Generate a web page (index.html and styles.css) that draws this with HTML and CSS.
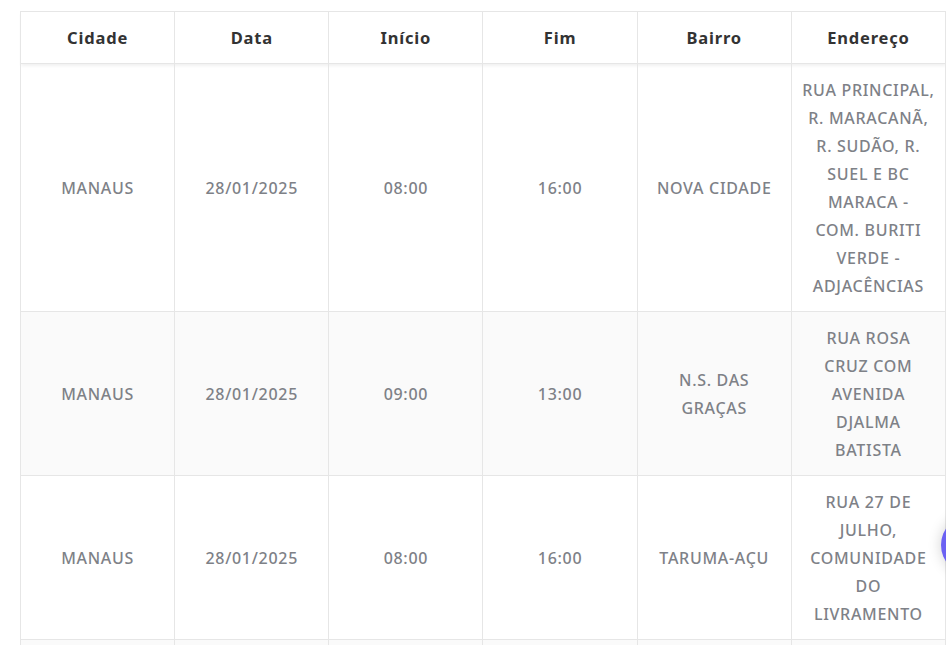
FILE: index.html
```html
<!DOCTYPE html>
<html lang="pt-BR">
<head>
<meta charset="utf-8">
<title>Agenda</title>
<link rel="stylesheet" href="styles.css">
</head>
<body>
<div class="page">
  <table class="agenda">
    <thead>
      <tr>
        <th>Cidade</th>
        <th>Data</th>
        <th>Início</th>
        <th>Fim</th>
        <th>Bairro</th>
        <th>Endereço</th>
      </tr>
    </thead>
    <tbody>
      <tr>
        <td>MANAUS</td>
        <td>28/01/2025</td>
        <td>08:00</td>
        <td>16:00</td>
        <td>NOVA CIDADE</td>
        <td>RUA PRINCIPAL,<br>R. MARACANÃ,<br>R. SUDÃO, R.<br>SUEL E BC<br>MARACA -<br>COM. BURITI<br>VERDE -<br>ADJACÊNCIAS</td>
      </tr>
      <tr>
        <td>MANAUS</td>
        <td>28/01/2025</td>
        <td>09:00</td>
        <td>13:00</td>
        <td>N.S. DAS<br>GRAÇAS</td>
        <td>RUA ROSA<br>CRUZ COM<br>AVENIDA<br>DJALMA<br>BATISTA</td>
      </tr>
      <tr>
        <td>MANAUS</td>
        <td>28/01/2025</td>
        <td>08:00</td>
        <td>16:00</td>
        <td>TARUMA-AÇU</td>
        <td>RUA 27 DE<br>JULHO,<br>COMUNIDADE<br>DO<br>LIVRAMENTO</td>
      </tr>
      <tr class="fold">
        <td>MANAUS</td>
        <td>29/01/2025</td>
        <td>08:00</td>
        <td>16:00</td>
        <td>CENTRO</td>
        <td>RUA CENTRAL</td>
      </tr>
    </tbody>
  </table>
</div>
<button class="fab" aria-label="Ajuda"></button>
</body>
</html>
```
FILE: styles.css
```css
html, body {
  margin: 0;
  padding: 0;
  background: #ffffff;
  overflow: hidden;
}
body {
  font-family: "Noto Sans", "Open Sans", sans-serif;
  width: 946px;
  height: 645px;
}
.page {
  padding: 11px 0 0 20px;
  height: 634px;
  overflow: hidden;
}
.agenda {
  width: 926px;
  table-layout: fixed;
  border-collapse: collapse;
}
.agenda th,
.agenda td {
  border: 1px solid #e6e6e6;
  text-align: center;
  vertical-align: middle;
  padding: 12px 6px 11px;
  line-height: 28px;
  font-size: 16px;
}
.agenda th {
  color: #333333;
  font-weight: 700;
  font-size: 16.5px;
  letter-spacing: 0.8px;
}
.agenda thead tr {
  box-shadow: 0 2px 3px rgba(0,0,0,0.06);
}
.agenda td {
  color: #7e8187;
  font-weight: 500;
  letter-spacing: 0.7px;
}
.agenda tbody tr:nth-child(even) td {
  background: #fafafa;
}
.agenda .fold td {
  padding-top: 40px;
}
.fab {
  position: fixed;
  left: 941px;
  top: 515px;
  width: 60px;
  height: 60px;
  border-radius: 50%;
  border: none;
  background: #6b61f3;
  box-shadow: 0 0 14px rgba(0,0,0,0.18);
  padding: 0;
}
```
